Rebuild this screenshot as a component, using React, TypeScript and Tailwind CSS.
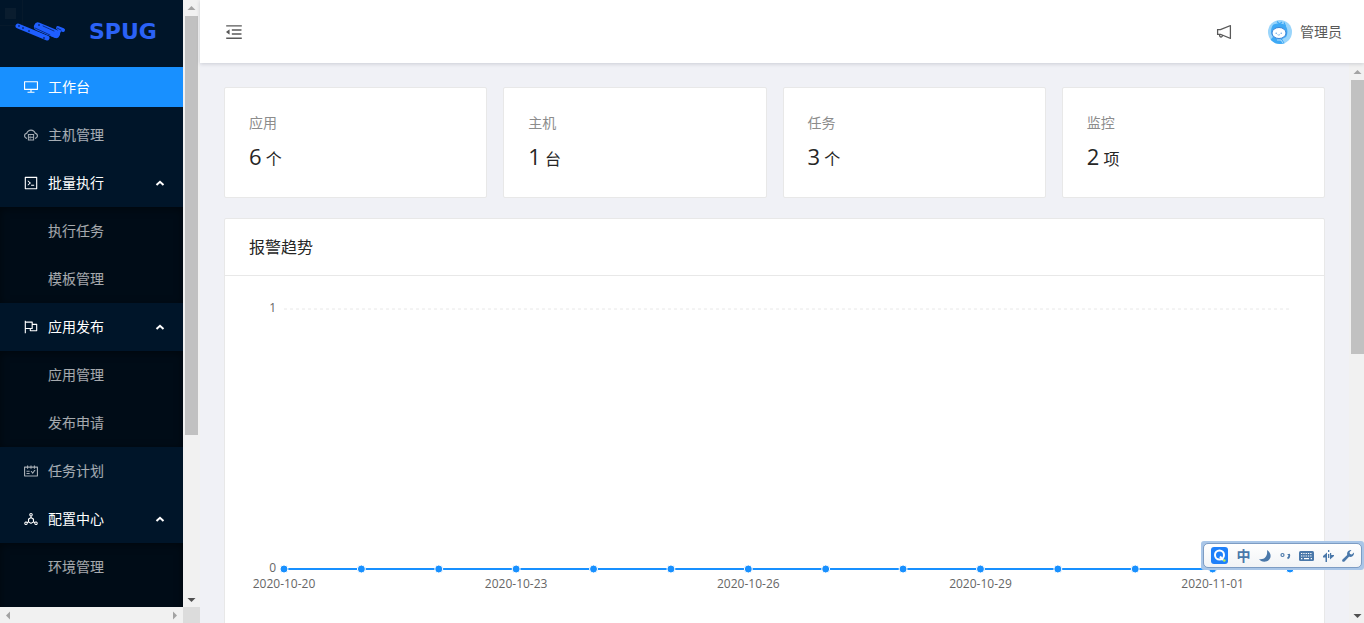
import { useState, ReactNode } from "react";
import {
    AiOutlineDesktop, AiOutlineCloudServer, AiOutlineCode, AiOutlineFlag, AiOutlineSchedule,
    AiOutlineDeploymentUnit, AiOutlineMenuFold, AiOutlineNotification,
} from "react-icons/ai";
import clsx from "clsx";

type MenuItem = {
    title: string,
    icon: ReactNode,
    children?: string[],
}

const menus: MenuItem[] = [
    { title: "工作台", icon: <AiOutlineDesktop size={16} /> },
    { title: "主机管理", icon: <AiOutlineCloudServer size={16} /> },
    { title: "批量执行", icon: <AiOutlineCode size={16} />, children: ["执行任务", "模板管理"] },
    { title: "应用发布", icon: <AiOutlineFlag size={16} />, children: ["应用管理", "发布申请"] },
    { title: "任务计划", icon: <AiOutlineSchedule size={16} /> },
    { title: "配置中心", icon: <AiOutlineDeploymentUnit size={16} />, children: ["环境管理"] },
];

const stats = [
    { title: "应用", value: 6, unit: "个" },
    { title: "主机", value: 1, unit: "台" },
    { title: "任务", value: 3, unit: "个" },
    { title: "监控", value: 2, unit: "项" },
];

const days = [
    "2020-10-20", "2020-10-21", "2020-10-22", "2020-10-23", "2020-10-24", "2020-10-25", "2020-10-26",
    "2020-10-27", "2020-10-28", "2020-10-29", "2020-10-30", "2020-10-31", "2020-11-01", "2020-11-02",
];

const Logo = () => (
    <div className="relative flex h-[63px] shrink-0 items-center gap-[23px] pl-[15px]">
        <div className="absolute left-0 top-0 h-[26px] w-[23px] border-b border-r border-[#06192b] p-[5px] pt-2">
            <div className="h-[11px] w-[11px] bg-[#0a1d2f]" />
        </div>
        <svg className="relative" width="51" height="20" viewBox="0 0 51 20" fill="none" strokeLinecap="round">
            <path d="M3 4 L32 16" stroke="#1f5eff" strokeWidth="5" />
            <path d="M23 4.5 L41 12" stroke="#1f5eff" strokeWidth="8" />
            <path d="M31 10 L41 14" stroke="#1f5eff" strokeWidth="4" />
            <path d="M43 6 L48 8" stroke="#1f5eff" strokeWidth="4" />
            <path d="M45 8 L43 12" stroke="#1f5eff" strokeWidth="3" />
            <path d="M20 6 L35 13" stroke="#0b2f85" strokeWidth="1" />
            <path d="M28 4 L39 9" stroke="#0b2f85" strokeWidth="1" />
            <path d="M42 6 L46 8" stroke="#0b2f85" strokeWidth="1" />
            <g fill="#0b2f85">
                <circle cx="4" cy="4" r="1" />
                <circle cx="8" cy="6" r="1" />
                <circle cx="14" cy="9" r="1" />
                <circle cx="29" cy="16" r="1" />
                <circle cx="24" cy="3" r="1" />
            </g>
        </svg>
        <span className="font-['DejaVu_Sans'] text-[22px] font-bold text-[#2b62f6]">SPUG</span>
    </div>
);

const Arrow = ({ d, className }: { d: string, className: string }) => (
    <svg className={clsx("shrink-0", className)} width="17" height="16" viewBox="0 0 17 16" fill="currentColor">
        <path d={d} />
    </svg>
);

const UP = "M8.5 6 L12.5 10 H4.5 Z";
const DOWN = "M8.5 11 L12.5 7 H4.5 Z";

const SideMenu = () => {

    const [current, setCurrent] = useState("工作台");
    const [closed, setClosed] = useState<string[]>([]);

    const toggle = (title: string) => {
        setClosed(closed.includes(title) ? closed.filter(t => t !== title) : [...closed, title]);
    };

    return (
        <ul>
            {menus.map(m => (
                <li key={m.title} className="group flow-root">
                    {m.children ? (
                        <>
                            <button
                                onClick={() => toggle(m.title)}
                                aria-expanded={!closed.includes(m.title)}
                                className="my-1 flex h-10 w-full items-center gap-[9px] pl-[23px] pr-[18px] text-white"
                            >
                                {m.icon}
                                <span>{m.title}</span>
                                <svg className={clsx("ml-auto", closed.includes(m.title) && "rotate-180")} width="10" height="6" viewBox="0 0 10 6" fill="none" stroke="currentColor" strokeWidth="2">
                                    <path d="M1.5 5 L5 1.8 L8.5 5" />
                                </svg>
                            </button>
                            {!closed.includes(m.title) && (
                                <ul className="bg-[#000c17] shadow-[inset_0_2px_8px_rgba(0,0,0,0.45)] group-last:pb-12">
                                    {m.children.map(c => (
                                        <li key={c} className="flex h-12 items-center">
                                            <a href="#" className="w-full pl-12 text-white/65">{c}</a>
                                        </li>
                                    ))}
                                </ul>
                            )}
                        </>
                    ) : (
                        <a
                            href="#"
                            onClick={() => setCurrent(m.title)}
                            className={clsx("my-1 flex h-10 items-center gap-[9px] pl-[23px]", current === m.title ? "bg-[#1890ff] text-white" : "text-white/65")}
                        >
                            {m.icon}
                            <span>{m.title}</span>
                        </a>
                    )}
                </li>
            ))}
        </ul>
    );
};

const Sider = () => (
    <aside className="flex w-[200px] shrink-0 flex-col">
        <div className="flex min-h-0 flex-1">
            <nav className="flex flex-1 flex-col overflow-hidden bg-[#001529]">
                <Logo />
                <SideMenu />
            </nav>
            <div className="flex w-[17px] flex-col items-center bg-[#f1f1f1]">
                <Arrow d={UP} className="text-[#a3a3a3]" />
                <div className="h-[69%] w-[13px] bg-[#c1c1c1]" />
                <Arrow d={DOWN} className="mt-auto text-[#505050]" />
            </div>
        </div>
        <div className="flex h-4 bg-[#f1f1f1]">
            <Arrow d="M6 8.5 L10 4.5 V12.5 Z" className="text-[#a3a3a3]" />
            <Arrow d="M11 8.5 L7 4.5 V12.5 Z" className="ml-auto text-[#a3a3a3]" />
            <div className="h-4 w-[17px] bg-[#dcdcdc]" />
        </div>
    </aside>
);

const Avatar = () => (
    <svg width="24" height="24" viewBox="0 0 24 24">
        <clipPath id="avatar"><circle cx="12" cy="12" r="12" /></clipPath>
        <g clipPath="url(#avatar)">
            <rect width="24" height="24" fill="#9ad5fb" />
            <path d="M5 5 C7 3 15 3 17 5 C20 8 20 14 18 17 L14 19 L17 24 H5 L1 21 L5 17 C2 13 3 8 5 5 Z" fill="#3ea9f5" />
            <path d="M9 1.5 L11.5 4 L14 2 M16 2.5 L17.5 6" fill="none" stroke="#3ea9f5" strokeWidth="1.2" />
            <ellipse cx="11" cy="13" rx="7" ry="5.5" fill="#fff" stroke="#3b83d6" strokeWidth="1" />
            <circle cx="8.2" cy="13.2" r=".7" fill="#5c9fdf" />
            <circle cx="13.2" cy="13.2" r=".7" fill="#5c9fdf" />
            <path d="M9.5 14.6 Q10.7 15.6 12 14.6" fill="none" stroke="#5c9fdf" strokeWidth=".7" />
            <path d="M9 20 L13 20 L15 23" fill="none" stroke="#b4e0fc" />
        </g>
    </svg>
);

const Header = () => (
    <header className="relative flex h-[63px] shrink-0 items-center bg-white pl-6 pr-[22px] text-[#595959] shadow-[0_1px_4px_rgba(0,21,41,0.16)]">
        <button aria-label="collapse menu" className="text-[20px]"><AiOutlineMenuFold /></button>
        <button aria-label="notifications" className="ml-auto text-[18px]"><AiOutlineNotification /></button>
        <button className="ml-[35px] flex items-center gap-2">
            <Avatar />
            <span>管理员</span>
        </button>
    </header>
);

const AlarmChart = () => {

    const pos = (i: number) => `${i * 100 / (days.length - 1)}%`;

    return (
        <svg className="ml-[35px] block h-[340px] w-[calc(100%-45px)] overflow-visible text-[12px]" fill="#666">
            <text x="-8" y="12" textAnchor="end">1</text>
            <line x1="0" x2="100%" y1="9" y2="9" stroke="#e8e8e8" strokeDasharray="3 3" />
            <text x="-8" y="272" textAnchor="end">0</text>
            <line x1="0" x2="100%" y1="269" y2="269" stroke="#1890ff" strokeWidth="2" />
            {days.map((d, i) => (
                <g key={d}>
                    <circle cx={pos(i)} cy="269" r="4" fill="#1890ff" stroke="#fff" />
                    {i % 3 === 0 && <text x={pos(i)} y="288" textAnchor="middle">{d}</text>}
                </g>
            ))}
        </svg>
    );
};

// floating input method bar
const InputBar = () => (
    <div className="absolute right-0 top-[541px] h-[29px] w-[163px] rounded-[3px] bg-[#a9c6e8] p-0.5">
        <div className="flex h-full items-center justify-between rounded-[5px] border border-[#7d9cc3] bg-gradient-to-b from-white to-[#f1f3f6] pl-[7px] pr-[7px] text-[#4a78aa]">
            <svg width="17" height="17" viewBox="0 0 17 17">
                <rect width="17" height="17" rx="3" fill="#1f80fa" />
                <circle cx="8.5" cy="8" r="4.5" fill="none" stroke="#fff" strokeWidth="2" />
                <path d="M9 9.5 L12 13" stroke="#fff" strokeWidth="2" />
                <circle cx="13.3" cy="13.5" r="1.3" fill="#b9f04a" />
            </svg>
            <span className="text-[14px] leading-none font-bold">中</span>
            <svg width="12" height="12" viewBox="0 0 12 12" fill="currentColor">
                <path d="M8 0 C13 3 13 10 7 11.5 C4 12 1 11 0 9 C5 10 9 7 8 0 Z" />
            </svg>
            <svg width="11" height="8" viewBox="0 0 11 8" fill="none" stroke="currentColor">
                <circle cx="2.5" cy="3" r="1.5" strokeWidth="1.2" />
                <path d="M8.5 2 V3 M9 2 Q10 5 7.5 6.5" strokeWidth="1.8" />
            </svg>
            <svg width="15" height="10" viewBox="0 0 15 10">
                <rect width="15" height="10" rx="1.5" fill="currentColor" />
                <path d="M2 2.5 H13 M2 5 H13" stroke="#fff" strokeWidth="1.2" strokeDasharray="1.3 1" />
                <path d="M2 7.6 H3.3 M5 7.6 H10 M11.7 7.6 H13" stroke="#fff" strokeWidth="1.2" />
            </svg>
            <svg width="11" height="12" viewBox="0 0 11 12" fill="currentColor">
                <path d="M0 6 L4 2.5 V12 H2.5 V7.5 H0 Z" />
                <path d="M11 6 L7 9.5 V3 H8.2 V5 H11 Z M5 0 H6.3 V2 H5 Z M5 4 H6.3 V8 H5 Z" />
            </svg>
            <svg width="12" height="12" viewBox="0 0 12 12" fill="currentColor">
                <path d="M9.5 0 L7.5 2.2 L8 4 L9.8 4.5 L12 2.5 C12.3 5.5 10 7.5 7 6.8 L2.5 11.5 C1 12.5 -.6 11 .5 9.5 L5.2 5 C4.5 2 6.5 -.3 9.5 0 Z" />
            </svg>
        </div>
    </div>
);

const App = () => (
    <div className="relative flex h-screen overflow-hidden bg-[#f0f1f6] font-['Open_Sans','Noto_Sans_CJK_SC',sans-serif] text-[14px] leading-[22px]">
        <Sider />
        <div className="flex min-w-0 flex-1 flex-col">
            <Header />
            <div className="flex min-h-0 flex-1">
                <main className="min-w-0 flex-1 overflow-hidden p-6">
                    <div className="grid grid-cols-4 gap-4">
                        {stats.map(s => (
                            <section key={s.title} className="rounded-[2px] border border-[#e8e8e8] bg-white px-6 pb-5 pt-6">
                                <h3 className="text-[#8c8c8c]">{s.title}</h3>
                                <p className="mt-1 text-[16px] leading-9 text-[#262626]">
                                    <span className="text-[22px]">{s.value}</span> {s.unit}
                                </p>
                            </section>
                        ))}
                    </div>
                    <section className="mt-5 rounded-[2px] border border-[#e8e8e8] bg-white">
                        <h2 className="border-b border-[#e8e8e8] px-6 py-4 text-[16px] leading-6 text-[#262626]">报警趋势</h2>
                        <div className="p-6">
                            <AlarmChart />
                        </div>
                    </section>
                </main>
                <div className="flex w-[15px] shrink-0 flex-col overflow-hidden bg-[#f1f1f1] pt-px">
                    <Arrow d={UP} className="text-[#a3a3a3]" />
                    <div className="ml-0.5 h-[49%] bg-[#c1c1c1]" />
                    <Arrow d={DOWN} className="mt-auto text-[#505050]" />
                </div>
            </div>
        </div>
        <InputBar />
    </div>
);

export default App;
